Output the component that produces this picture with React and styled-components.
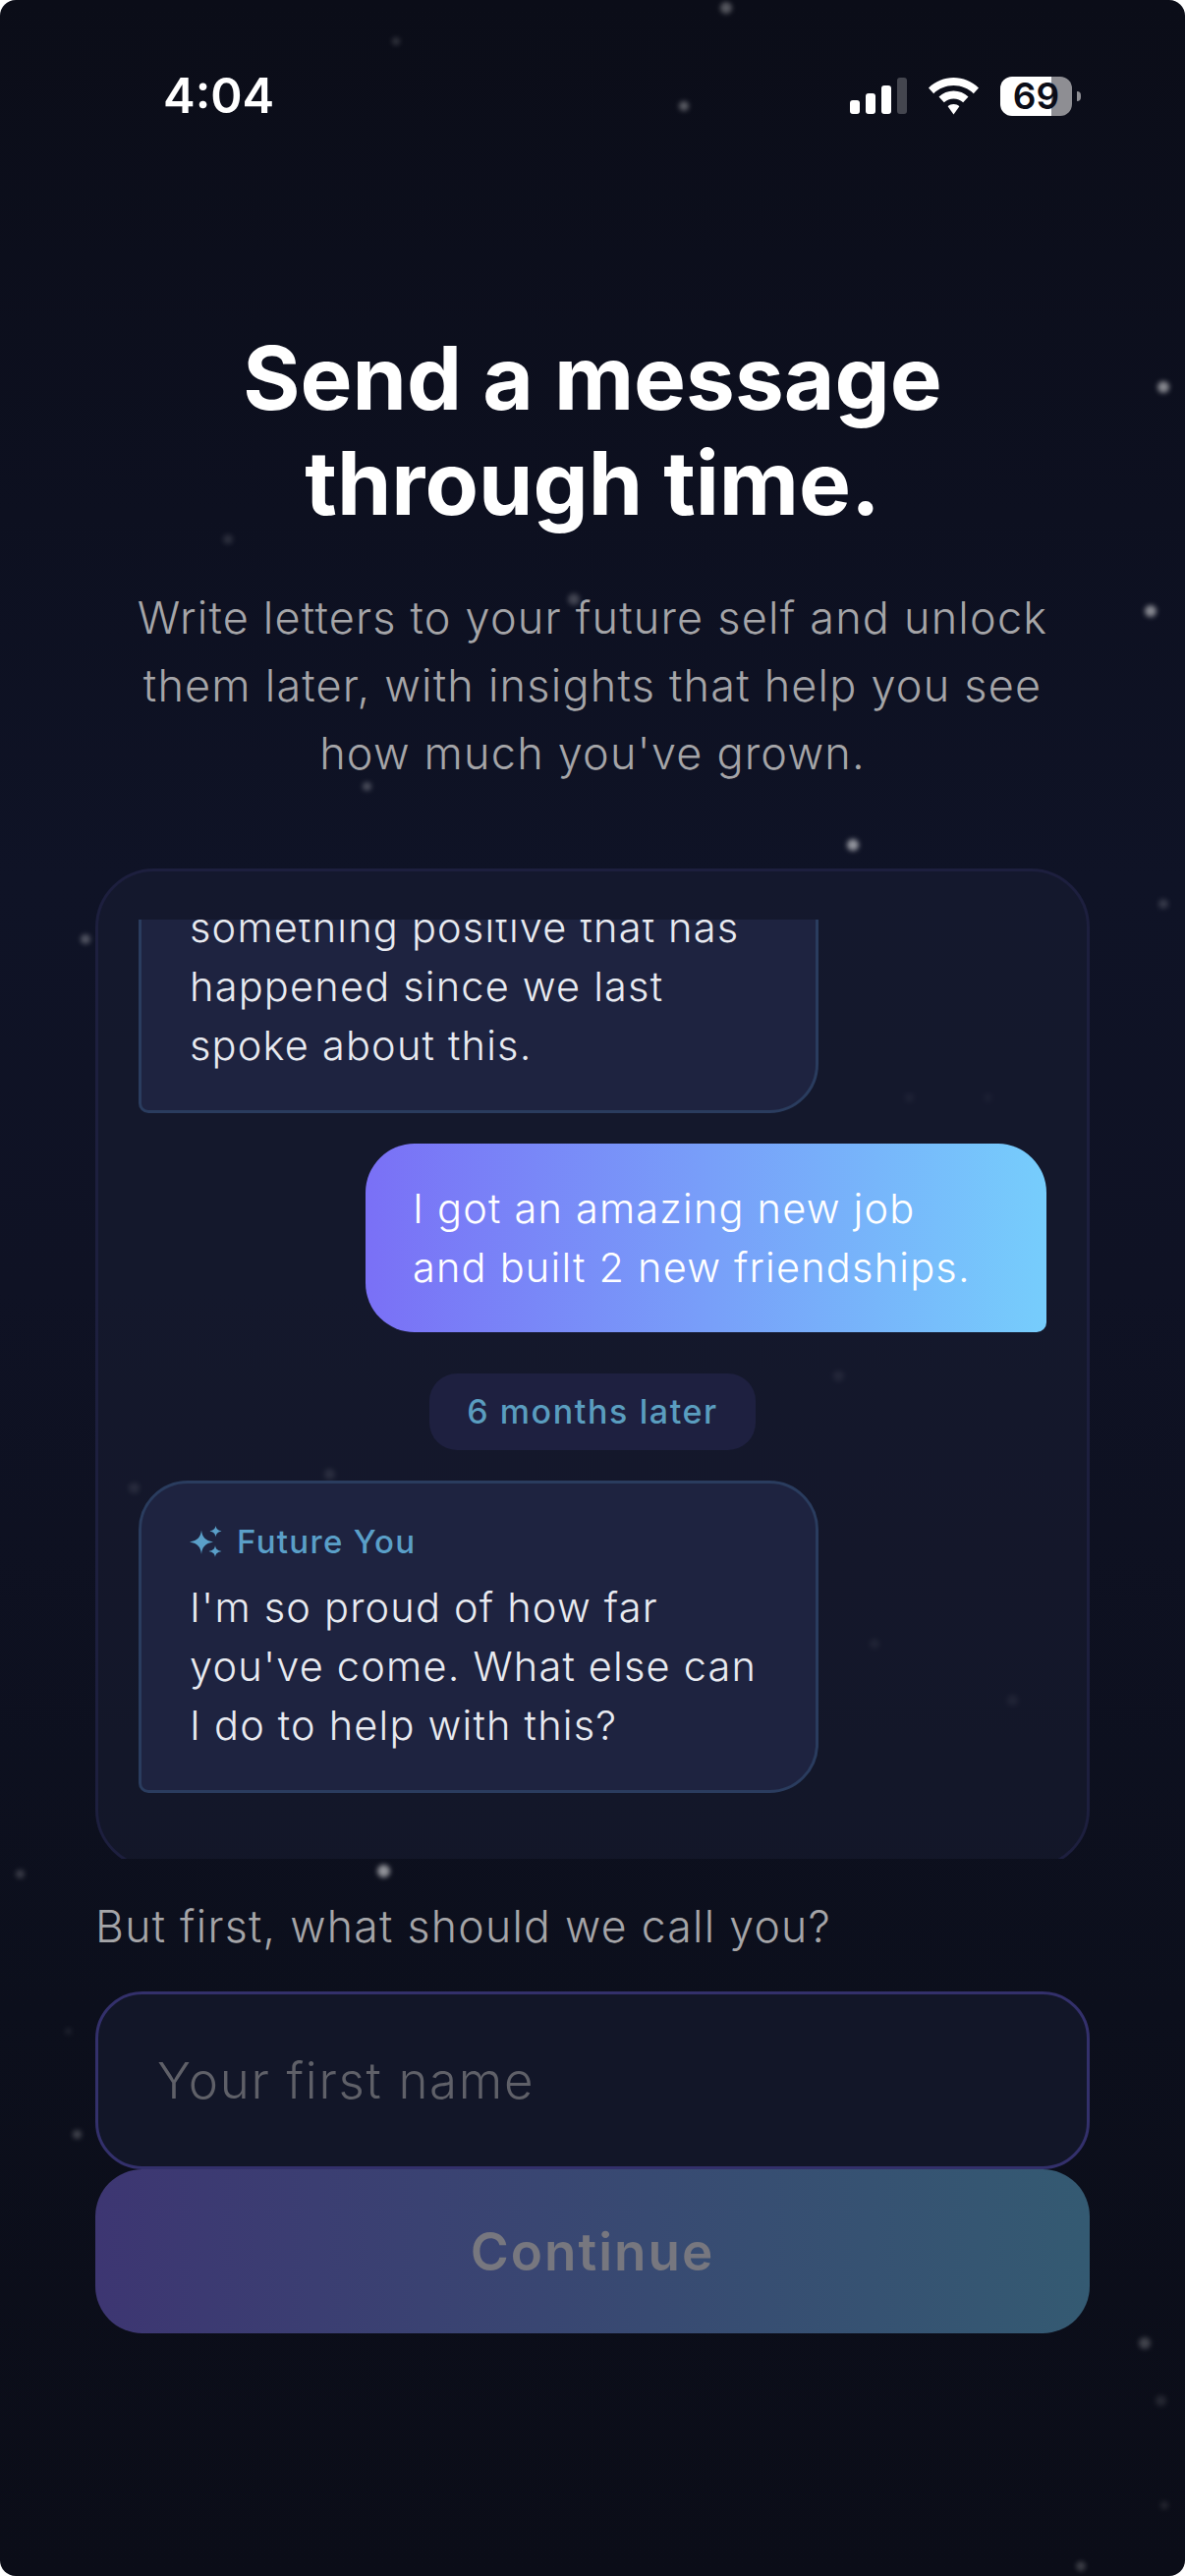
import React from 'react'
import styled, { createGlobalStyle } from 'styled-components'

const stars = [
    { x: 739, y: 8, s: 12, o: 0.3 }, { x: 403, y: 42, s: 8, o: 0.15 }, { x: 696, y: 108, s: 10, o: 0.32 },
    { x: 1184, y: 394, s: 12, o: 0.5 }, { x: 1171, y: 622, s: 12, o: 0.5 }, { x: 868, y: 860, s: 12, o: 0.55 },
    { x: 87, y: 956, s: 10, o: 0.28 }, { x: 1184, y: 920, s: 10, o: 0.16 }, { x: 232, y: 549, s: 10, o: 0.12 },
    { x: 584, y: 610, s: 12, o: 0.22 }, { x: 373, y: 800, s: 9, o: 0.25 },
    { x: 390, y: 1904, s: 13, o: 0.55 }, { x: 20, y: 1907, s: 9, o: 0.18 },
    { x: 335, y: 1500, s: 11, o: 0.18 }, { x: 136, y: 1514, s: 11, o: 0.16 }, { x: 853, y: 1400, s: 11, o: 0.12 },
    { x: 890, y: 1673, s: 10, o: 0.1 }, { x: 1030, y: 1730, s: 11, o: 0.1 }, { x: 925, y: 1117, s: 9, o: 0.08 },
    { x: 1005, y: 1117, s: 9, o: 0.06 }, { x: 78, y: 2172, s: 9, o: 0.22 }, { x: 69, y: 2067, s: 7, o: 0.08 },
    { x: 207, y: 2094, s: 10, o: 0.12 }, { x: 262, y: 2037, s: 9, o: 0.07 }, { x: 136, y: 2280, s: 12, o: 0.2 },
    { x: 445, y: 2255, s: 11, o: 0.2 }, { x: 837, y: 2254, s: 11, o: 0.2 }, { x: 1165, y: 2385, s: 12, o: 0.22 },
    { x: 1181, y: 2443, s: 11, o: 0.1 }, { x: 1185, y: 2550, s: 8, o: 0.1 }, { x: 1100, y: 2612, s: 10, o: 0.2 },
]

function App() {
    return (
        <Screen>
            <GlobalStyle />
            {stars.map((star) => (
                <Star key={`${star.x}-${star.y}`} $x={star.x} $y={star.y} $size={star.s} $opacity={star.o} />
            ))}
            <Content>
                {/*status bar */}
                <StatusBar>
                    <Time>4:04</Time>
                    <StatusIcons>
                        <svg width="58" height="38" viewBox="0 0 58 38">
                            <rect x="0" y="23" width="10" height="14" rx="3" fill="#fff" />
                            <rect x="16" y="16" width="10" height="21" rx="3" fill="#fff" />
                            <rect x="32" y="8" width="10" height="29" rx="3" fill="#fff" />
                            <rect x="48" y="0" width="10" height="37" rx="3" fill="#44464f" />
                        </svg>
                        <svg width="51" height="38" viewBox="0 0 51 38" fill="#fff">
                            <path d="M25.5 0C35 0 44 3.800 51 10.500L45.800 16.200C40.400 11 33.200 8 25.500 8C17.800 8 10.600 11 5.200 16.200L0 10.500C7 3.800 16 0 25.500 0Z" />
                            <path d="M25.500 13.500C31.200 13.500 36.500 15.700 40.500 19.500L35.200 25.200C32.600 22.800 29.200 21.400 25.500 21.400C21.800 21.400 18.400 22.800 15.800 25.200L10.500 19.500C14.500 15.700 19.800 13.500 25.500 13.500Z" />
                            <path d="M25.500 27C27.800 27 29.800 27.800 31.400 29.200L25.500 37.500L19.600 29.200C21.200 27.800 23.200 27 25.500 27Z" />
                        </svg>
                        <Battery>69</Battery>
                    </StatusIcons>
                </StatusBar>

                {/*intro */}
                <Title>Send a message<br />through time.</Title>
                <Subtitle>
                    Write letters to your future self and unlock<br />
                    them later, with insights that help you see<br />
                    how much you've grown.
                </Subtitle>

                {/*chat preview */}
                <ChatClip>
                    <ChatCard>
                        <ChatScroll>
                            <AiBubble $clipped>
                                something positive that has<br />
                                happened since we last<br />
                                spoke about this.
                            </AiBubble>
                            <UserBubble>
                                I got an amazing new job<br />
                                and built 2 new friendships.
                            </UserBubble>
                            <TimePill>6 months later</TimePill>
                            <AiBubble>
                                <BubbleLabel>
                                    <svg width="34" height="34" viewBox="0 0 34 34" fill="#5a9fc8">
                                        <path d="M12 5.500C12.800 12 15.500 16 24 17.500C15.500 19 12.800 23 12 30C11.200 23 8.500 19 0 17.500C8.500 16 11.200 12 12 5.500Z" />
                                        <path d="M26.500 1C27 4 28.500 5.500 32.500 6.500C28.500 7.500 27 9 26.500 12.500C26 9 24.500 7.500 20.500 6.500C24.500 5.500 26 4 26.500 1Z" />
                                        <path d="M26 21C26.500 24.500 28 26 32.500 27C28 28 26.500 29.500 26 33C25.500 29.500 24 28 19.500 27C24 26 25.500 24.500 26 21Z" />
                                    </svg>
                                    Future You
                                </BubbleLabel>
                                I'm so proud of how far<br />
                                you've come. What else can<br />
                                I do to help with this?
                            </AiBubble>
                        </ChatScroll>
                    </ChatCard>
                </ChatClip>

                {/*name form */}
                <NameLabel>But first, what should we call you?</NameLabel>
                <NameInput placeholder="Your first name" readOnly />
                <ContinueBtn type="button">Continue</ContinueBtn>
            </Content>
        </Screen>
    )
}

//style
const GlobalStyle = createGlobalStyle`
    html, body {
        margin: 0;
        padding: 0;
        background: #fff;
    }
    * {
        box-sizing: border-box;
    }
`
const Screen = styled.div`
    position: relative;
    width: 1206px;
    height: 2622px;
    overflow: hidden;
    border-radius: 16px;
    background: linear-gradient(180deg, #0b0d18 0%, #0d1020 20%, #0f1326 34%, #0f1224 50%, #0c0f1c 78%, #0b0d18 100%);
    font-family: Inter, "Liberation Sans", sans-serif;
`
const Star = styled.span`
    position: absolute;
    left: ${(p) => p.$x - p.$size / 2}px;
    top: ${(p) => p.$y - p.$size / 2}px;
    width: ${(p) => p.$size}px;
    height: ${(p) => p.$size}px;
    border-radius: 50%;
    background: #fff;
    opacity: ${(p) => p.$opacity};
    filter: blur(2.5px);
`
const Content = styled.div`
    position: relative;
    display: flex;
    flex-direction: column;
    padding: 77px 97px 0;
`
const StatusBar = styled.div`
    display: flex;
    justify-content: space-between;
    align-items: center;
    height: 41px;
    margin: 0 18px 0 69px;
`
const Time = styled.div`
    color: #fff;
    font-size: 49px;
    font-weight: 600;
    line-height: 41px;
`
const StatusIcons = styled.div`
    display: flex;
    align-items: center;
    gap: 22px;
    svg {
        display: block;
    }
`
const Battery = styled.div`
    position: relative;
    width: 73px;
    height: 40px;
    border-radius: 12px;
    background: linear-gradient(90deg, #fff 0 71%, #8e8e93 71% 100%);
    color: #0b0d18;
    font-size: 37px;
    font-weight: 600;
    line-height: 40px;
    text-align: center;
    &::after {
        content: '';
        position: absolute;
        left: 78px;
        top: 15px;
        width: 4px;
        height: 10px;
        border-radius: 0 5px 5px 0;
        background: #8e8e93;
    }
`
const Title = styled.h1`
    margin: 213px 0 0;
    color: #fff;
    font-size: 89px;
    font-weight: 700;
    line-height: 107px;
    text-align: center;
`
const Subtitle = styled.p`
    margin: 49px 0 0;
    color: #a5a5a8;
    font-size: 45px;
    font-weight: 300;
    letter-spacing: 1.2px;
    line-height: 69px;
    text-align: center;
`
const ChatClip = styled.div`
    height: 1008px;
    margin-top: 83px;
    overflow: hidden;
`
const ChatCard = styled.div`
    display: flex;
    height: 1018px;
    padding: 49px 41px 74px;
    border: 3px solid #1d1f3e;
    border-radius: 60px;
    background: rgba(26, 30, 52, 0.5);
`
const ChatScroll = styled.div`
    flex: 1;
    display: flex;
    flex-direction: column;
    justify-content: flex-end;
    gap: 31px;
    overflow: hidden;
`
const AiBubble = styled.div`
    flex-shrink: 0;
    align-self: flex-start;
    width: 692px;
    padding: ${(p) => (p.$clipped ? '120px' : '36px')} 49px 36px;
    border: 3px solid #2a3c5e;
    border-radius: 50px 50px 50px 10px;
    background: #1e2340;
    color: #e8eaf0;
    font-size: 41.5px;
    font-weight: 300;
    letter-spacing: 1.2px;
    line-height: 60px;
`
const BubbleLabel = styled.div`
    display: flex;
    align-items: center;
    gap: 14px;
    height: 46px;
    margin-bottom: 14px;
    color: #5a9fc8;
    font-size: 33px;
    font-weight: 500;
    letter-spacing: 1.3px;
    line-height: 46px;
`
const UserBubble = styled.div`
    flex-shrink: 0;
    align-self: flex-end;
    width: 693px;
    padding: 36px 48px;
    border-radius: 50px 50px 10px 50px;
    background: linear-gradient(90deg, #7a70f6 0%, #76cdfc 100%);
    color: #fff;
    font-size: 41.5px;
    font-weight: 300;
    letter-spacing: 1.2px;
    line-height: 60px;
`
const TimePill = styled.div`
    flex-shrink: 0;
    align-self: center;
    height: 78px;
    margin: 11px 0 0;
    padding: 0 38px;
    border-radius: 28px;
    background: #1e2040;
    color: #5a9dbf;
    font-size: 34px;
    font-weight: 500;
    letter-spacing: 1.6px;
    line-height: 78px;
`
const NameLabel = styled.div`
    margin-top: 41px;
    color: #a5a5a8;
    font-size: 44.5px;
    font-weight: 300;
    letter-spacing: 1.3px;
    line-height: 56px;
`
const NameInput = styled.input`
    display: block;
    width: 100%;
    height: 181px;
    margin-top: 38px;
    padding: 0 60px;
    border: 3px solid #33306b;
    border-radius: 48px;
    background: #121628;
    outline: none;
    color: #fff;
    font-family: inherit;
    font-size: 51px;
    font-weight: 300;
    letter-spacing: 1.7px;
    &::placeholder {
        color: #5f6068;
        opacity: 1;
    }
`
const ContinueBtn = styled.button`
    display: block;
    width: 100%;
    height: 167px;
    padding: 0;
    border: none;
    border-radius: 48px;
    background: linear-gradient(90deg, #3d3672 0%, #345a72 100%);
    color: #77777f;
    font-family: inherit;
    font-size: 53px;
    font-weight: 600;
    letter-spacing: 2px;
`

export default App
